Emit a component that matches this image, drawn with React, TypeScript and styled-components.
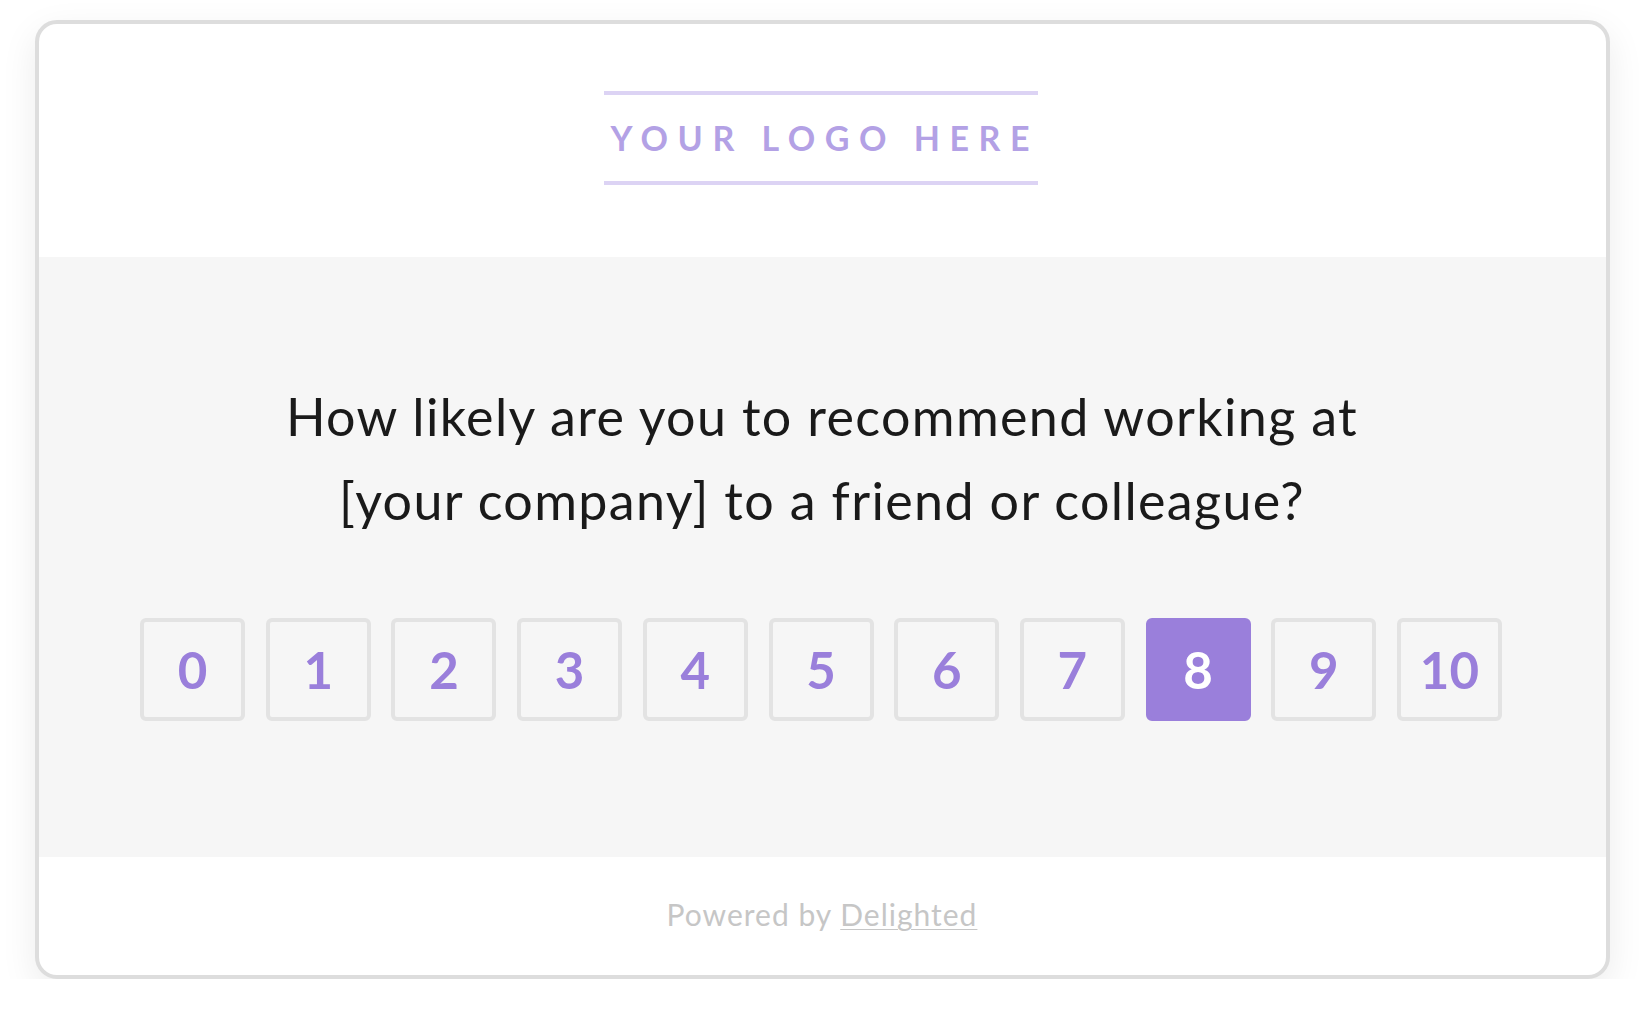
import React from 'react'
import styled, { createGlobalStyle } from 'styled-components'

const GlobalStyle = createGlobalStyle`
  html, body {
    margin: 0;
    padding: 0;
    background: #ffffff;
  }
  body {
    font-family: Lato, "Liberation Sans", sans-serif;
  }
`

const Card = styled.div`
  width: 1575px;
  box-sizing: border-box;
  margin: 20px auto 0;
  border: 4px solid #dddddd;
  border-radius: 22px;
  overflow: hidden;
  background: #ffffff;
  box-shadow: 0 12px 36px rgba(0, 0, 0, 0.08);
`

const Header = styled.div`
  display: flex;
  justify-content: center;
  padding: 67px 0 72px;
`

const Logo = styled.div`
  box-sizing: border-box;
  height: 94px;
  width: 434px;
  margin-right: 3px;
  border-top: 4px solid #dcd3f4;
  border-bottom: 4px solid #dcd3f4;
  padding-left: 7px;
  line-height: 86px;
  font-size: 34px;
  font-weight: 700;
  letter-spacing: 0.28em;
  color: #b3a1e5;
  white-space: nowrap;
`

const Body = styled.div`
  background: #f6f6f6;
  padding: 117px 0 136px;
  display: flex;
  flex-direction: column;
  align-items: center;
`

const Question = styled.h1`
  margin: 0;
  font-size: 52px;
  font-weight: 400;
  line-height: 84px;
  letter-spacing: 1.35px;
  color: #1a1a1a;
  text-align: center;
`

const Scale = styled.div`
  display: flex;
  gap: 20.7px;
  margin-top: 76px;
  margin-right: 2px;
`

const ScoreButton = styled.button<{ $active?: boolean }>`
  box-sizing: border-box;
  width: 105px;
  height: 103px;
  padding: 0;
  border: 4px solid ${(p) => (p.$active ? '#9a7fdb' : '#e3e3e3')};
  border-radius: 6px;
  background: ${(p) => (p.$active ? '#9a7fdb' : '#f6f6f6')};
  color: ${(p) => (p.$active ? '#ffffff' : '#9a7fdb')};
  font-family: Lato, "Liberation Sans", sans-serif;
  font-size: 51px;
  font-weight: 700;
  display: flex;
  align-items: center;
  justify-content: center;
  cursor: pointer;
`

const Footer = styled.div`
  height: 118px;
  line-height: 114px;
  text-align: center;
  font-size: 30px;
  letter-spacing: 1px;
  color: #c6c6c6;

  a {
    color: inherit;
    text-decoration: underline;
    text-underline-offset: 3px;
    text-decoration-thickness: 1px;
  }
`

const scores = [0, 1, 2, 3, 4, 5, 6, 7, 8, 9, 10]

const App: React.FC = () => {
  return (
    <>
      <GlobalStyle />
      <Card>
        <Header>
          <Logo>YOUR LOGO HERE</Logo>
        </Header>
        <Body>
          <Question>
            How likely are you to recommend working at
            <br />
            [your company] to a friend or colleague?
          </Question>
          <Scale>
            {scores.map((score) => (
              <ScoreButton key={score} $active={score === 8}>
                {score}
              </ScoreButton>
            ))}
          </Scale>
        </Body>
        <Footer>
          Powered by <a href="#">Delighted</a>
        </Footer>
      </Card>
    </>
  )
}

export default App
